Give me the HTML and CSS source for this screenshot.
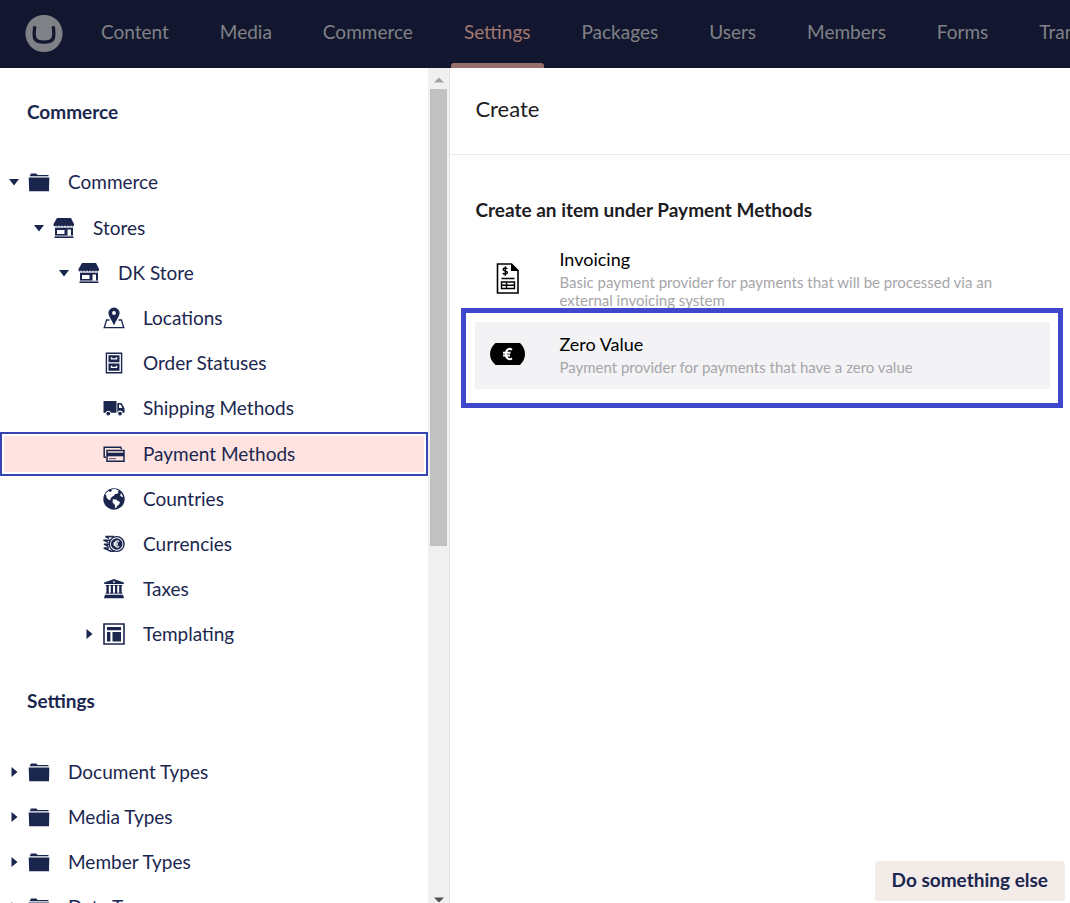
FILE: index.html
```
<!DOCTYPE html>
<html lang="en">
<head>
<meta charset="utf-8">
<meta name="viewport" content="width=device-width, initial-scale=1">
<title>Settings - Payment Methods</title>
<link rel="stylesheet" href="styles.css">
</head>
<body>
<svg class="sprite" aria-hidden="true">
  <symbol id="folder" viewBox="0 0 22 22"><path d="M2 4.500 3 2.500h5.500l1 1.500H20.500V5.300H1.500zM0.700 6.600H21.300L21 20.200H1.200z"/></symbol>
  <symbol id="store" viewBox="0 0 22 22"><path d="M4 1h14l3 6v1.500l-1.500 1-1.500-1-1.500 1-1.500-1-1.500 1-1.500-1-1.500 1-1.500-1-1.500 1-1.500-1-1.500 1-1.500-1-1.500 1-1-1V7z"/><path fill-rule="evenodd" d="M2 11h18v7.500h-2V12.500h-3.500v6H2zM4 13v4h7.500v-4z"/><path opacity=".35" d="M2 9.500h18V11H2zM2 18.500h18v1H2z"/><path d="M1.500 19.500h19V21h-19z"/></symbol>
  <symbol id="pin" viewBox="0 0 22 22"><path fill-rule="evenodd" d="M11 .5a5.600 5.600 0 0 1 5.600 5.600c0 3-3 6.400-5.600 12.400C8.400 12.500 5.400 9.100 5.400 6.100A5.600 5.600 0 0 1 11 .5zm0 3.600a1.900 1.900 0 1 0 0 3.800 1.900 1.900 0 0 0 0-3.800z"/><path fill="none" stroke="currentColor" stroke-width="1.300" d="M6.500 13H3.600L1.200 20.700h19.600L18.400 13h-2.900"/></symbol>
  <symbol id="cabinet" viewBox="0 0 22 22"><path fill="none" stroke="currentColor" stroke-width="1.400" d="M3.400 1.200h15.200v19.600H3.400z"/><path fill-rule="evenodd" d="M5.500 3.200h11v7h-11zM7.800 5.200v2.300h6.400V5.200h-1.400v1H9.200v-1zM5.500 11.600h11v7.200h-11zM7.800 13.800v2.300h6.400v-2.300h-1.400v1H9.200v-1z"/></symbol>
  <symbol id="truck" viewBox="0 0 22 22"><path fill-rule="evenodd" d="M.5 4h13v11.800H8a2.800 2.800 0 0 0-5.400 0H.5zM14.300 6h4.200l3 5.300v4.500h-1.700a2.800 2.800 0 0 0-5.500 0zM16 7.500v3.600h3.500l-2-3.600z"/><circle cx="5.300" cy="16.600" r="1.900"/><circle cx="17" cy="16.600" r="1.900"/></symbol>
  <symbol id="cards" viewBox="0 0 22 22"><path fill="none" stroke="currentColor" stroke-width="1.500" d="M3 14.500 1.200 14V4.200h16.500l.8 2M4 7.500h17v10.800H4z"/><path d="M4 9.700h17v3.600H4z"/><path opacity=".65" d="M6 15h7v1.200H6z"/></symbol>
  <symbol id="globe" viewBox="0 0 22 22"><circle cx="11" cy="11" r="10.700"/><path fill="#fff" d="M8.500 1.400 12 1.100l4 1.400-1.700 1.100 1.500.5-1.500 1.700-2.200.3-1.200 1.700-1.900 1-1.700 2.200.3 1.300-2-.5-2-2.100-.2-2L2.300 6l3-3.100 1.900 1.200 1.500-1zM9.800 11.200l3.400.4 1.800 1.500 2.100.8-1 2.500-2 1.700-.8 2-1.300-.3-.2-3-2.200-2.200zM18 5l2.200 3.500-1.500.6-1.500-1.600z"/></symbol>
  <symbol id="coins" viewBox="0 0 22 22"><circle cx="13.700" cy="11" r="7.400" fill="none" stroke="currentColor" stroke-width="1.400"/><circle cx="13.700" cy="11" r="5.800"/><path fill="none" stroke="#fff" stroke-width="1.200" d="M16.200 8.500a3 3 0 1 0 0 5M10.500 10.200h4.500M10.500 11.900h4.500"/><path fill="none" stroke="currentColor" stroke-width="1.500" d="M11 3.500H2.500l3.500 1.800M7 7.200H.5l5 2.500M6 11.200H1l4.500 2.300M6 15H.8l7 3.200h4"/></symbol>
  <symbol id="bank" viewBox="0 0 22 22"><path fill-rule="evenodd" d="M11 1 20.800 4.600V6H1.200V4.600zm0 2a.9.9 0 1 0 0 1.800.9.900 0 0 0 0-1.800zM2.800 7h3.600v1h-.6v6.500h.6v1.200H2.800v-1.200h.6V8h-.6zm4.400 0h3.400v1H10v6.500h.6v1.200H7.200v-1.200h.6V8h-.6zm4.200 0h3.400v1h-.6v6.500h.6v1.200h-3.400v-1.200h.6V8h-.6zm4.200 0h3.600v1h-.6v6.500h.6v1.200h-3.600v-1.200h.6V8h-.6zM2 16.800h18v1l.8.600v1.800H1.200v-1.800l.8-.6z"/></symbol>
  <symbol id="layout" viewBox="0 0 22 22"><path fill="none" stroke="currentColor" stroke-width="1.600" d="M1 1h20v20H1z"/><path d="M4 4h14v3.200H4zM4 9h3.400v9.500H4zM9.500 9H18v9.500H9.500z"/></symbol>
  <symbol id="down" viewBox="0 0 10 10"><path d="M0 2h10L5 8.500z"/></symbol>
  <symbol id="right" viewBox="0 0 10 10"><path d="M2.500 0v10l6-5z"/></symbol>
</svg>

<header class="topbar">
  <a class="brand" href="#" aria-label="Umbraco">
    <svg viewBox="0 0 38 38"><circle cx="19" cy="18.500" r="18.600" fill="#808186"/><path fill="#12172f" d="M8.200 11l3.200.4C10.600 17 10.500 21 11.800 23.300c1 1.700 3.600 2.100 7.200 2.100s6.200-.4 7.200-2.100c1.300-2.300 1.200-6.300.4-11.900l3.200-.4c1 6.500 1 11.800-.8 14.600-1.600 2.400-5 3.200-10 3.200s-8.400-.8-10-3.200C7.200 22.800 7.200 17.500 8.200 11z"/></svg>
  </a>
  <nav class="sections">
    <a href="#">Content</a><a href="#">Media</a><a href="#">Commerce</a><a class="current" href="#">Settings</a><a href="#">Packages</a><a href="#">Users</a><a href="#">Members</a><a href="#">Forms</a><a href="#">Translation</a>
  </nav>
</header>

<div class="workspace">
  <aside class="sidebar">
    <div class="trees">
      <h2>Commerce</h2>
      <ul class="tree">
        <li><div class="row"><button class="caret" aria-label="Collapse"><svg><use href="#down"/></svg></button><a href="#"><svg class="icon"><use href="#folder"/></svg>Commerce</a></div>
          <ul>
            <li><div class="row"><button class="caret" aria-label="Collapse"><svg><use href="#down"/></svg></button><a href="#"><svg class="icon"><use href="#store"/></svg>Stores</a></div>
              <ul>
                <li><div class="row"><button class="caret" aria-label="Collapse"><svg><use href="#down"/></svg></button><a href="#"><svg class="icon"><use href="#store"/></svg>DK Store</a></div>
                  <ul>
                    <li><div class="row leaf"><a href="#"><svg class="icon"><use href="#pin"/></svg>Locations</a></div></li>
                    <li><div class="row leaf"><a href="#"><svg class="icon"><use href="#cabinet"/></svg>Order Statuses</a></div></li>
                    <li><div class="row leaf"><a href="#"><svg class="icon"><use href="#truck"/></svg>Shipping Methods</a></div></li>
                    <li><div class="row leaf selected"><a href="#"><svg class="icon"><use href="#cards"/></svg>Payment Methods</a></div></li>
                    <li><div class="row leaf"><a href="#"><svg class="icon"><use href="#globe"/></svg>Countries</a></div></li>
                    <li><div class="row leaf"><a href="#"><svg class="icon"><use href="#coins"/></svg>Currencies</a></div></li>
                    <li><div class="row leaf"><a href="#"><svg class="icon"><use href="#bank"/></svg>Taxes</a></div></li>
                    <li><div class="row"><button class="caret" aria-label="Expand"><svg><use href="#right"/></svg></button><a href="#"><svg class="icon"><use href="#layout"/></svg>Templating</a></div></li>
                  </ul>
                </li>
              </ul>
            </li>
          </ul>
        </li>
      </ul>
      <h2>Settings</h2>
      <ul class="tree">
        <li><div class="row"><button class="caret" aria-label="Expand"><svg><use href="#right"/></svg></button><a href="#"><svg class="icon"><use href="#folder"/></svg>Document Types</a></div></li>
        <li><div class="row"><button class="caret" aria-label="Expand"><svg><use href="#right"/></svg></button><a href="#"><svg class="icon"><use href="#folder"/></svg>Media Types</a></div></li>
        <li><div class="row"><button class="caret" aria-label="Expand"><svg><use href="#right"/></svg></button><a href="#"><svg class="icon"><use href="#folder"/></svg>Member Types</a></div></li>
        <li><div class="row"><button class="caret" aria-label="Expand"><svg><use href="#right"/></svg></button><a href="#"><svg class="icon"><use href="#folder"/></svg>Data Types</a></div></li>
      </ul>
    </div>
    <div class="scrollbar" aria-hidden="true">
      <svg class="arrow" viewBox="0 0 10 6"><path d="M0 5.500 5 .5l5 5z"/></svg>
      <div class="track"><div class="thumb"></div></div>
      <svg class="arrow end" viewBox="0 0 10 6"><path d="M0 .5h10l-5 5z"/></svg>
    </div>
  </aside>

  <main class="dialog">
    <h1>Create</h1>
    <section class="choices">
      <h3>Create an item under Payment Methods</h3>
      <ul>
        <li>
          <a class="choice" href="#">
            <svg class="choice-icon" viewBox="0 0 36 36"><path fill="none" stroke="#000" stroke-width="1.600" d="M7.500 4h14l6.500 6.500V33H7.500z"/><path d="M21 3.500v7.500h7.500z"/><path fill="none" stroke="#000" stroke-width="1.400" d="M17.300 8.700c-1-1.200-4.200-1-4.200.8 0 2 4.400 1 4.400 3.100 0 1.900-3.400 2-4.700.6M15.300 6.400v9.400"/><path fill="none" stroke="#000" stroke-width="1.400" d="M11.500 18.500h13M11.500 22h13v6.500h-13zM16.500 22v6.500M11.500 25.200h13"/></svg>
            <span class="text"><span class="name">Invoicing</span><span class="about">Basic payment provider for payments that will be processed via an external invoicing system</span></span>
          </a>
        </li>
        <li class="marked">
          <a class="choice active" href="#">
            <svg class="choice-icon" viewBox="0 0 36 36"><path d="M5.500 7h24.500q5 5 5 11T30 29H5.500Q0 24 0 18T5.500 7z"/><path fill="none" stroke="#fff" stroke-width="2" d="M22 13.800c-2.600-2-6.200-.6-6.200 4.200s3.600 6.200 6.200 4.400M13 16.700h7.500M13 19.600h7"/></svg>
            <span class="text"><span class="name">Zero Value</span><span class="about">Payment provider for payments that have a zero value</span></span>
          </a>
        </li>
      </ul>
    </section>
    <footer><button class="action">Do something else</button></footer>
  </main>
</div>
</body>
</html>
```
FILE: styles.css
```
* { box-sizing: border-box; }
body {
  margin: 0;
  height: 100vh;
  display: flex;
  flex-direction: column;
  overflow: hidden;
  font-family: Lato, sans-serif;
  font-size: 19px;
  line-height: 24px;
  color: #1b264f;
  background: #fff;
}
ul { margin: 0; padding: 0; list-style: none; }
a { color: inherit; text-decoration: none; }
svg { display: block; fill: currentColor; }
button { border: 0; padding: 0; background: none; font: inherit; color: inherit; }
.sprite { position: absolute; width: 0; height: 0; }

.topbar {
  flex: none;
  height: 68px;
  display: flex;
  align-items: stretch;
  padding-left: 25px;
  background: #12172f;
  color: #808186;
  overflow: hidden;
}
.brand { flex: none; align-self: center; width: 38px; }
.sections { display: flex; gap: 25px; padding-left: 25px; white-space: nowrap; }
.sections a {
  display: flex;
  align-items: center;
  padding: 0 13px 4px;
}
.sections .current { color: #a17872; position: relative; }
.sections .current::after {
  content: "";
  position: absolute;
  inset: auto 0 0;
  height: 5px;
  border-radius: 3px 3px 0 0;
  background: #966f6d;
}

.workspace { flex: 1; min-height: 0; display: flex; }
.sidebar { flex: none; width: calc(42% + 1px); display: flex; border-right: 1px solid #e3e3e5; }
.trees { flex: 1; min-width: 0; overflow: hidden; }
.trees h2 { margin: 0; padding: 32px 27px 35px; font-size: 19px; line-height: 24px; }
.trees .tree + h2 { padding: 33px 27px 36px; }
.tree > li > ul { padding-top: 1px; }
.row { display: flex; align-items: center; height: 45px; padding-left: 9px; }
.tree ul .row { padding-left: 34px; }
.tree ul ul .row { padding-left: 59px; }
.tree ul ul ul .row { padding-left: 84px; }
.row a { flex: 1; display: flex; align-items: center; gap: 18px; padding-left: 9px; }
.tree .leaf a { padding-left: 19px; }
.caret { flex: none; width: 10px; }
.caret svg { width: 10px; height: 10px; }
.icon { flex: none; width: 22px; height: 22px; }
.selected {
  height: 44px;
  margin-top: 2px;
  background: #ffe3e0;
  border: 2px solid #3544b1;
  box-shadow: inset 0 0 0 2px #fff;
}
.tree ul ul ul .selected { padding-left: 82px; }

.scrollbar {
  flex: none;
  width: 21px;
  padding: 9px 2px 0;
  display: flex;
  flex-direction: column;
  align-items: center;
  background: #f0f0f0;
}
.arrow { flex: none; width: 10px; height: 6px; fill: #a3a3a3; }
.arrow.end { fill: #505050; }
.track { flex: 1; width: 100%; padding-top: 6px; }
.thumb { height: 56.5%; background: #c1c1c1; }

.dialog { flex: 1; min-width: 0; display: flex; flex-direction: column; color: #1d1d1f; }
.dialog h1 {
  margin: 0;
  padding: 26px 25px 30px;
  border-bottom: 1px solid #e9e9eb;
  font-size: 22px;
  line-height: 30px;
  font-weight: 400;
}
.choices { flex: 1; padding: 43px 20px 0 25px; }
.choices h3 { margin: 0 0 15px; font-size: 19px; line-height: 24px; }
.choice { display: flex; align-items: center; padding: 9px 15px 13px; color: #000; }
.choice-icon { flex: none; width: 36px; height: 36px; }
.text { padding: 3px 20px 0 33px; }
.name, .about { display: block; }
.name { font-size: 18px; line-height: 20px; margin-bottom: 4px; }
.about { font-size: 15px; line-height: 18px; color: #a6a6a9; }
.active { background: #f3f3f5; }
.marked { position: relative; }
/* Callout frame laid over the list */
.marked::after {
  content: "";
  position: absolute;
  inset: -14px -13px -19px -14px;
  border: 5px solid #3f48cc;
  pointer-events: none;
}
footer { display: flex; justify-content: flex-end; padding: 0 5px 2px; }
.action {
  padding: 7px 17px 9px;
  border-radius: 4px;
  background: #f3ebe8;
  color: #1b264f;
  font-weight: 700;
}
```
